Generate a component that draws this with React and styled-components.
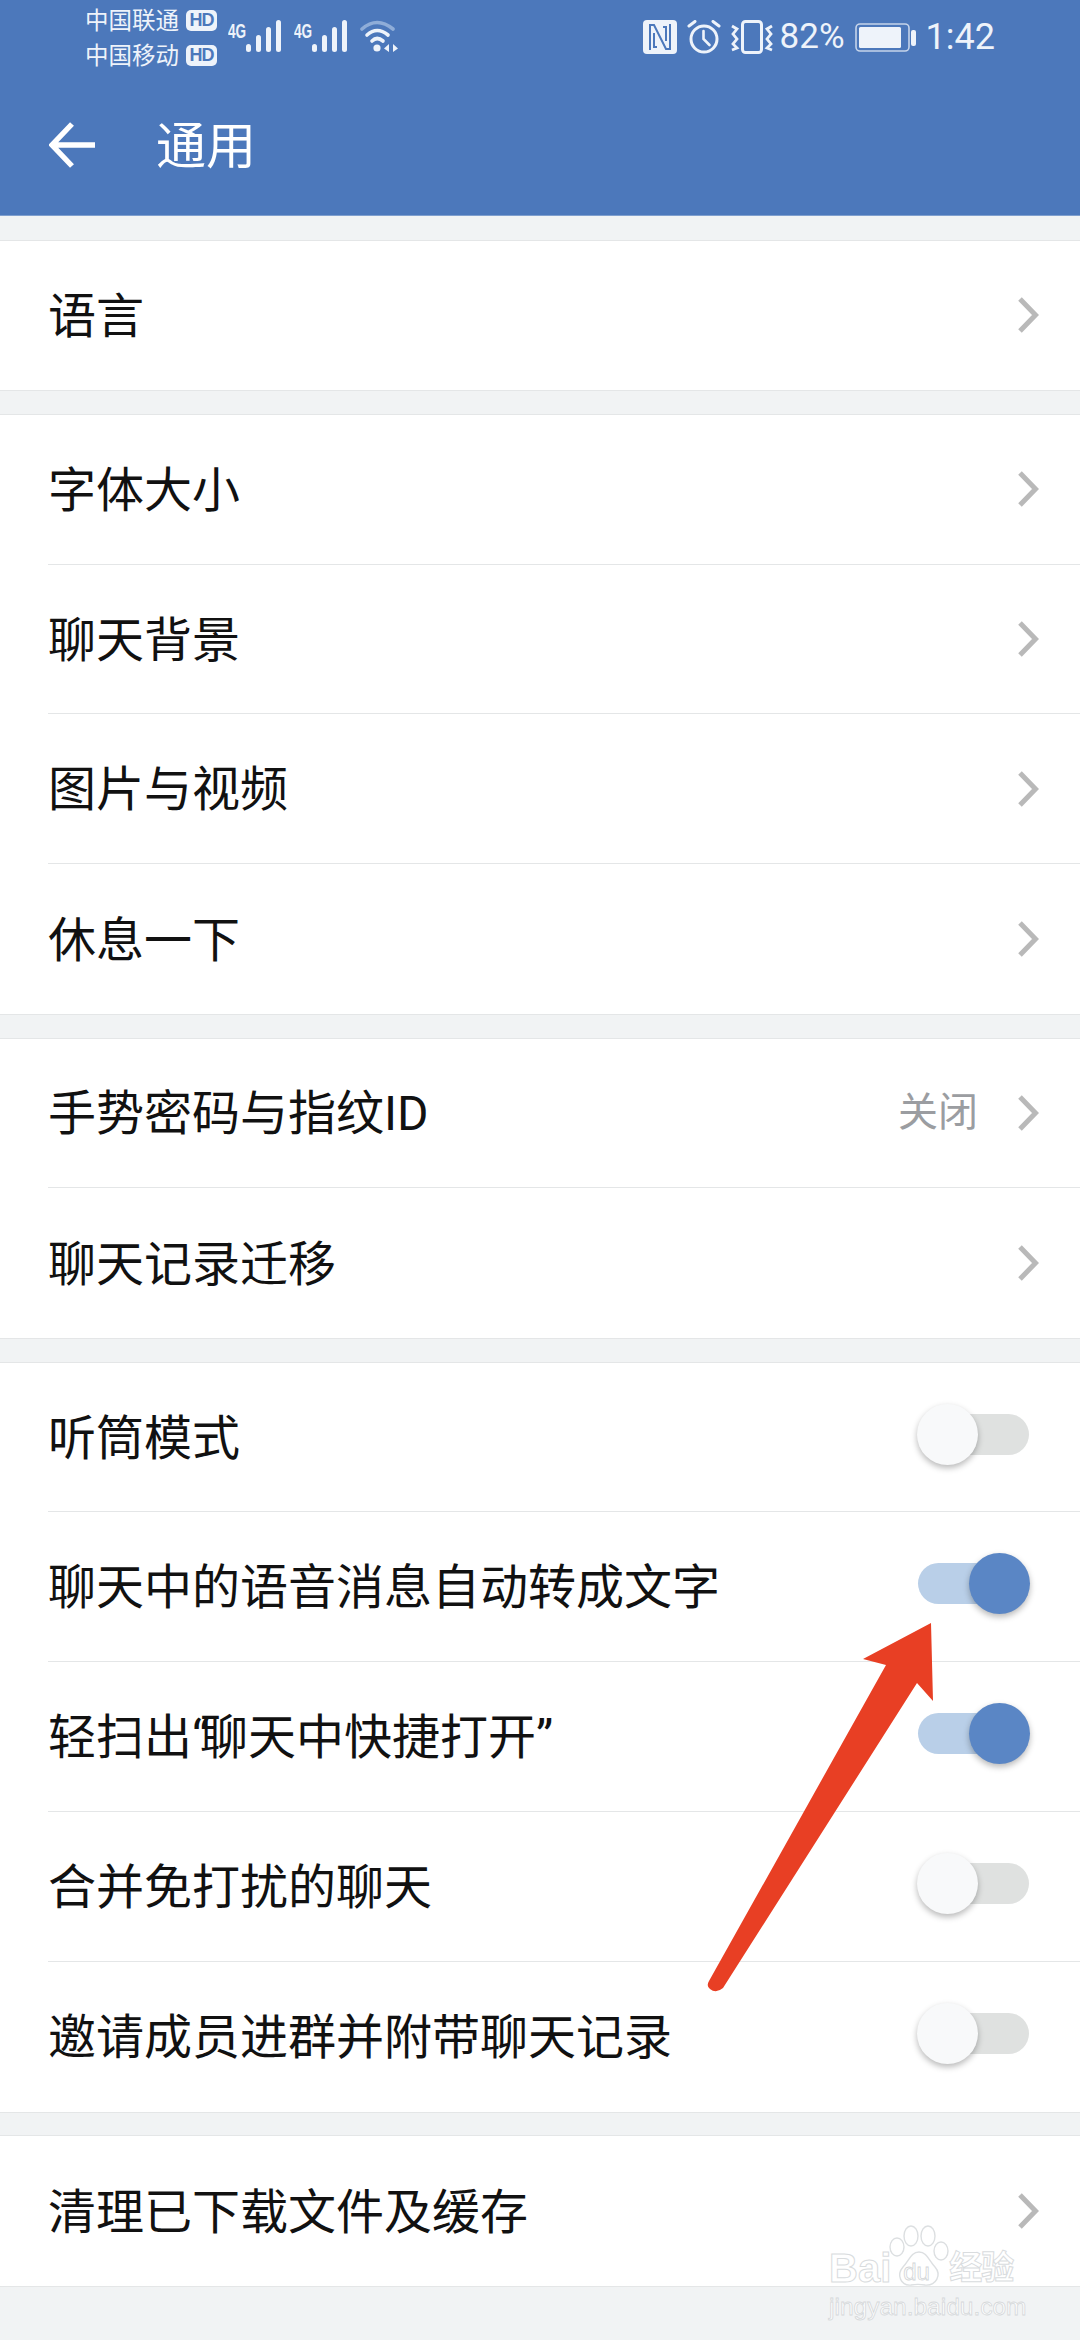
import styled, { createGlobalStyle } from "styled-components";

const GlobalStyle = createGlobalStyle`
  html, body {
    margin: 0;
    padding: 0;
    background: #f1f3f4;
  }
  * { box-sizing: border-box; }
`;

const groups = [
  [{ label: "语言" }],
  [
    { label: "字体大小" },
    { label: "聊天背景" },
    { label: "图片与视频" },
    { label: "休息一下" },
  ],
  [{ label: "手势密码与指纹ID", value: "关闭" }, { label: "聊天记录迁移" }],
  [
    { label: "听筒模式", toggle: "off" },
    { label: "聊天中的语音消息自动转成文字", toggle: "on" },
    { label: "轻扫出“聊天中快捷打开”", toggle: "on" },
    { label: "合并免打扰的聊天", toggle: "off" },
    { label: "邀请成员进群并附带聊天记录", toggle: "off" },
  ],
  [{ label: "清理已下载文件及缓存" }],
];

// the quotes are much narrower in the reference than in the font
function labelParts(label) {
  return label
    .split(/([“”])/)
    .map((part, i) => (part === "“" || part === "”" ? <Quote key={i}>{part}</Quote> : part));
}

function SignalIcon() {
  return (
    <svg width="36" height="36" viewBox="0 0 36 36">
      <g fill="#eef3fa">
        <rect x="0" y="25" width="5" height="8" rx="2.5" />
        <rect x="10" y="16" width="5" height="17" rx="2.5" />
        <rect x="20" y="8" width="5" height="25" rx="2.5" />
        <rect x="30" y="1" width="5" height="32" rx="2.5" />
      </g>
    </svg>
  );
}

function WifiIcon() {
  return (
    <svg width="40" height="36" viewBox="0 0 40 36" fill="none">
      <path d="M2 10 Q17 -3 33 10" stroke="#8fadd8" strokeWidth="3.6" strokeLinecap="round" />
      <path d="M7 16 Q17 7 28 16" stroke="#eef3fa" strokeWidth="3.6" strokeLinecap="round" />
      <path d="M12 22 Q17 17 23 22" stroke="#eef3fa" strokeWidth="3.6" strokeLinecap="round" />
      <circle cx="17" cy="29" r="3.6" fill="#eef3fa" />
      <path d="M29 25 L24 29.5 L29 33 Z M33 25 L38 29.5 L33 33 Z" fill="#eef3fa" />
    </svg>
  );
}

function NfcIcon() {
  return (
    <svg width="34" height="34" viewBox="0 0 34 34">
      <rect width="34" height="34" rx="4" fill="#eef3fa" />
      <path d="M7 30 V5 H11 L23 29 H27 V4" fill="none" stroke="#4c78bb" strokeWidth="2" />
      <path d="M11 13 V27 H14 M23 21 V7 H20" fill="none" stroke="#4c78bb" strokeWidth="2" />
    </svg>
  );
}

function AlarmIcon() {
  return (
    <svg width="34" height="34" viewBox="0 0 34 34" fill="none" stroke="#eef3fa" strokeLinecap="round">
      <circle cx="17" cy="19" r="13" strokeWidth="3" />
      <path d="M16.5 11 V19 L22.5 25" strokeWidth="2.6" />
      <path d="M2 6 L8 1.5 M32 6 L26 1.5" strokeWidth="3" />
    </svg>
  );
}

function VibrateIcon() {
  return (
    <svg width="42" height="34" viewBox="0 0 42 34" fill="none" stroke="#eef3fa">
      <rect x="11.5" y="1.5" width="19" height="31" rx="3" strokeWidth="3" />
      <path d="M1 6 L6 9 L2 14 L6 19 L2 24 L6 28 L1 30" strokeWidth="2.8" />
      <path d="M41 6 L36 9 L40 14 L36 19 L40 24 L36 28 L41 30" strokeWidth="2.8" />
    </svg>
  );
}

function BatteryIcon() {
  return (
    <svg width="61" height="29" viewBox="0 0 61 29">
      <rect x="1" y="1" width="53" height="27" rx="4" fill="none" stroke="#c5d4ea" strokeWidth="1.6" />
      <rect x="4" y="4" width="42" height="21" rx="1.5" fill="#eef3fa" />
      <rect x="56" y="7" width="5" height="16" rx="2" fill="#eef3fa" />
    </svg>
  );
}

function Chevron() {
  return (
    <svg width="22" height="38" viewBox="0 0 22 38" fill="none">
      <path d="M3 3 L18.5 19 L3 35" stroke="#b9b9b9" strokeWidth="5" />
    </svg>
  );
}

function RedArrow() {
  return (
    <ArrowLayer width="1080" height="2340" viewBox="0 0 1080 2340">
      <path
        d="M931 1623 L863 1659 L886 1665 L709 1981 Q706 1986 710 1989 Q716 1994 723 1988 L917 1683 L933 1701 Z"
        fill="#e83f24"
      />
    </ArrowLayer>
  );
}

function BaiduPaw() {
  return (
    <svg width="62" height="64" viewBox="0 0 62 64" fill="#ffffff" stroke="#dcdfe1" strokeWidth="1.4">
      <ellipse cx="8" cy="22" rx="7" ry="9" />
      <ellipse cx="22" cy="11" rx="7" ry="10" />
      <ellipse cx="39" cy="11" rx="7" ry="10" />
      <ellipse cx="52" cy="26" rx="7" ry="9" />
      <path d="M30 27 C38 27 40 36 46 42 C53 50 47 61 36 60 C30 59 28 59 22 60 C12 61 7 50 14 42 C20 36 22 27 30 27 Z" />
    </svg>
  );
}

export default function App() {
  return (
    <Page>
      <GlobalStyle />
      <Header>
        <StatusBar>
          <StatusLeft>
            <Carriers>
              <CarrierLine>
                中国联通<HdBadge>HD</HdBadge>
              </CarrierLine>
              <CarrierLine>
                中国移动<HdBadge>HD</HdBadge>
              </CarrierLine>
            </Carriers>
            <Network>
              <NetLabel>4G</NetLabel>
              <SignalIcon />
            </Network>
            <Network>
              <NetLabel>4G</NetLabel>
              <SignalIcon />
            </Network>
            <WifiIcon />
          </StatusLeft>
          <StatusRight>
            <NfcIcon />
            <AlarmIcon />
            <VibrateIcon />
            <Percent>82%</Percent>
            <BatteryIcon />
            <Clock>1:42</Clock>
          </StatusRight>
        </StatusBar>
        <TitleBar>
          <svg width="48" height="48" viewBox="0 0 48 48" fill="none">
            <path d="M23 3 L3 24 L23 45 M3 24 H46" stroke="#fff" strokeWidth="5.4" />
          </svg>
          <Title>通用</Title>
        </TitleBar>
      </Header>

      <List>
        {groups.map((group, i) => (
          <Group key={i}>
            {group.map((item) => (
              <Row key={item.label}>
                <RowLabel>{labelParts(item.label)}</RowLabel>
                {item.value && <RowValue>{item.value}</RowValue>}
                {item.toggle ? (
                  <Toggle $on={item.toggle === "on"}>
                    <Knob $on={item.toggle === "on"} />
                  </Toggle>
                ) : (
                  <Chevron />
                )}
              </Row>
            ))}
          </Group>
        ))}
      </List>

      <RedArrow />

      <Watermark>
        <BrandLine>
          <BrandText>Bai</BrandText>
          <PawSlot>
            <BaiduPaw />
            <PawDu>du</PawDu>
          </PawSlot>
          <BrandText>经验</BrandText>
        </BrandLine>
        <BrandUrl>jingyan.baidu.com</BrandUrl>
      </Watermark>
    </Page>
  );
}

const Page = styled.div`
  position: relative;
  width: 1080px;
  height: 2340px;
  overflow: hidden;
  background: #f1f3f4;
  font-family: Roboto, "Noto Sans CJK SC", sans-serif;
`;

const Header = styled.header`
  height: 216px;
  background: #4c78bb;
  color: #eef3fa;
  border-bottom: 1px solid #7f9fce;
`;

const StatusBar = styled.div`
  height: 72px;
  padding: 2px 85px 0 85px;
  display: flex;
  justify-content: space-between;
  align-items: center;
`;

const StatusLeft = styled.div`
  display: flex;
  align-items: center;
`;

const StatusRight = styled.div`
  display: flex;
  align-items: center;
  gap: 10px;
`;

const Carriers = styled.div`
  display: flex;
  flex-direction: column;
  gap: 11px;
  margin-top: 2px;
  margin-right: 11px;
`;

const CarrierLine = styled.div`
  display: flex;
  align-items: center;
  gap: 7px;
  font-size: 23.5px;
  line-height: 24px;
  white-space: nowrap;
`;

const HdBadge = styled.span`
  width: 31px;
  height: 21px;
  border-radius: 5px;
  background: #eef3fa;
  color: #4c78bb;
  font-family: "Liberation Sans", sans-serif;
  font-size: 18px;
  font-weight: 700;
  line-height: 21px;
  text-align: center;
  letter-spacing: -1px;
`;

const Network = styled.div`
  display: flex;
  align-items: flex-start;
  margin-right: 12px;
`;

const NetLabel = styled.span`
  width: 18px;
  font-family: "Liberation Sans", sans-serif;
  font-size: 20px;
  font-weight: 700;
  line-height: 20px;
  white-space: nowrap;
  transform: scaleX(0.68);
  transform-origin: left center;
  margin-top: 2px;
`;

const Percent = styled.span`
  font-size: 35px;
  line-height: 36px;
  margin-left: -3px;
`;

const Clock = styled.span`
  font-size: 36px;
  line-height: 36px;
`;

const TitleBar = styled.div`
  height: 143px;
  padding: 3px 0 0 49px;
  display: flex;
  align-items: center;
  gap: 59px;
`;

const Title = styled.h1`
  margin: 3px 0 0;
  color: #fff;
  font-size: 50px;
  font-weight: 400;
  line-height: 60px;
`;

const List = styled.main`
  padding-top: 24.5px;
  display: flex;
  flex-direction: column;
  gap: 24.4px;
`;

const Group = styled.section`
  background: #fff;
  box-shadow: 0 -1px 0 #e4e6e7, 0 1px 0 #e4e6e7;
`;

const Row = styled.div`
  height: 149.85px;
  margin-left: 48px;
  padding-right: 41px;
  display: flex;
  align-items: center;
  border-bottom: 1px solid #e4e6e7;
  &:last-child {
    border-bottom: none;
  }
`;

const RowLabel = styled.span`
  flex: 1;
  padding-top: 3px;
  color: #111;
  font-size: 48px;
  line-height: 60px;
  white-space: nowrap;
`;

const Quote = styled.span`
  letter-spacing: -9px;
`;

const RowValue = styled.span`
  margin-right: 39px;
  color: #9b9da1;
  font-size: 40px;
  line-height: 50px;
`;

const Toggle = styled.div`
  position: relative;
  width: 111px;
  height: 41px;
  margin: 0 10px 6px 0;
  border-radius: 21px;
  background: ${(props) => (props.$on ? "#b9cfe8" : "#dfe1e0")};
`;

const Knob = styled.div`
  position: absolute;
  top: -10px;
  left: ${(props) => (props.$on ? "51px" : "-1px")};
  width: 61px;
  height: 61px;
  border-radius: 50%;
  background: ${(props) => (props.$on ? "#5a86c5" : "#f8f9fa")};
  box-shadow: 0 3px 6px rgba(0, 0, 0, 0.28);
`;

const ArrowLayer = styled.svg`
  position: absolute;
  top: 0;
  left: 0;
  pointer-events: none;
`;

const Watermark = styled.div`
  position: absolute;
  left: 829px;
  top: 2225px;
  width: 200px;
  color: #fff;
  font-family: "Liberation Sans", "Noto Sans CJK SC", sans-serif;
`;

const BrandLine = styled.div`
  display: flex;
  align-items: flex-end;
  height: 62px;
`;

const BrandText = styled.span`
  font-size: 40px;
  font-weight: 700;
  line-height: 40px;
  margin-bottom: -1px;
  color: rgba(255, 255, 255, 0.85);
  -webkit-text-stroke: 1px #d9dcde;
  &:last-child {
    font-size: 33px;
    letter-spacing: -1px;
  }
`;

const PawSlot = styled.div`
  position: relative;
  width: 58px;
  height: 62px;
  margin: 0 2px 0 -2px;
  flex-shrink: 0;
`;

const PawDu = styled.span`
  position: absolute;
  left: 14px;
  bottom: 3px;
  font-size: 24px;
  line-height: 24px;
  color: #fff;
  -webkit-text-stroke: 0.8px #d2d5d7;
`;

const BrandUrl = styled.div`
  margin-top: 6px;
  font-size: 24.5px;
  line-height: 28px;
  white-space: nowrap;
  color: rgba(255, 255, 255, 0.9);
  -webkit-text-stroke: 0.8px #d5d8da;
`;
